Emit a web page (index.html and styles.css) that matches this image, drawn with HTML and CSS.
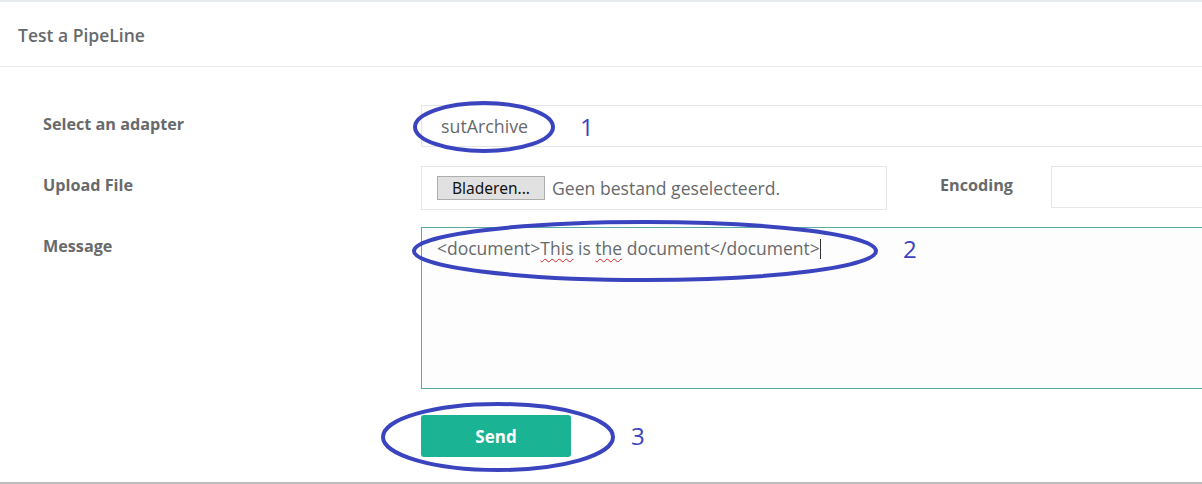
FILE: index.html
```html
<!DOCTYPE html>
<html>
<head>
<meta charset="utf-8">
<link rel="stylesheet" href="styles.css">
</head>
<body>
<div class="page">
  <div class="title">Test a PipeLine</div>
  <div class="content">
    <div class="row row-adapter">
      <div class="label">Select an adapter</div>
      <div class="input input-adapter">sutArchive</div>
    </div>
    <div class="row row-file">
      <div class="label">Upload File</div>
      <div class="input input-file">
        <span class="file-btn">Bladeren...</span>
        <span class="file-text">Geen bestand geselecteerd.</span>
      </div>
      <div class="label label-enc">Encoding</div>
      <div class="input input-enc"></div>
    </div>
    <div class="row row-msg">
      <div class="label">Message</div>
      <div class="textarea">&lt;document&gt;<span class="spell">This</span> is <span class="spell">the</span> document&lt;/document&gt;<span class="caret"></span></div>
    </div>
    <div class="row row-send">
      <div class="label"></div>
      <div class="btn">Send</div>
    </div>
  </div>
  <svg class="marks" width="1202" height="484" viewBox="0 0 1202 484">
    <ellipse cx="484" cy="127" rx="69" ry="24" />
    <ellipse cx="645" cy="251" rx="231" ry="29" />
    <ellipse cx="498" cy="437" rx="115" ry="33" />
    <text x="580" y="136">1</text>
    <text x="903" y="258">2</text>
    <text x="631" y="445">3</text>
  </svg>
</div>
</body>
</html>
```
FILE: styles.css
```css
html, body {
  margin: 0;
  padding: 0;
  background: #ffffff;
  overflow: hidden;
}
body {
  font-family: "Open Sans", "Liberation Sans", sans-serif;
  color: #676a6c;
}
.page {
  position: relative;
  width: 1202px;
  height: 484px;
  box-sizing: border-box;
  border-top: 2px solid #e7eaec;
  border-bottom: 2px solid #bcbcbc;
  overflow: hidden;
}
.title {
  height: 65px;
  box-sizing: border-box;
  border-bottom: 1px solid #e7eaec;
  padding-left: 18px;
  display: flex;
  align-items: center;
  font-size: 17.5px;
  font-weight: 600;
  color: #676a6c;
  padding-top: 2px;
}
.content {
  padding: 38px 0 0 43px;
}
.row {
  display: flex;
  align-items: flex-start;
}
.label {
  width: 378px;
  flex: none;
  padding-top: 9px;
  font-size: 16.2px;
  line-height: 21px;
  font-weight: 700;
  color: #676a6c;
}
.row-adapter .label { padding-top: 9px; }
.input {
  box-sizing: border-box;
  border: 1px solid #e5e6e7;
  background: #fff;
  flex: none;
}
.input-adapter {
  width: 800px;
  height: 42px;
  padding-left: 19px;
  display: flex;
  align-items: center;
  font-size: 17.8px;
}
.row-adapter { margin-bottom: 19px; }
.input-file {
  width: 466px;
  height: 44px;
  padding-left: 15px;
  display: flex;
  align-items: center;
  gap: 7px;
  font-size: 16px;
}
.file-btn {
  box-sizing: border-box;
  height: 24px;
  width: 108px;
  display: flex;
  align-items: center;
  justify-content: center;
  background: #e1e1e1;
  border: 1px solid #adadad;
  color: #111;
  font-family: "Noto Sans", "Open Sans", sans-serif;
  font-size: 15.5px;
}
.file-text {
  color: #676a6c;
  font-size: 17.6px;
}
.label-enc {
  width: 73px;
  margin-left: 53px;
  white-space: nowrap;
}
.input-enc {
  margin-left: 38px;
  width: 300px;
  height: 42px;
}
.row-file { margin-bottom: 17px; }
.textarea {
  box-sizing: border-box;
  width: 800px;
  height: 162px;
  flex: none;
  border: 1px solid #5aaba5;
  border-right: none;
  background: #fdfdfd;
  padding: 7px 15px;
  font-size: 17.5px;
  line-height: 27px;
  color: #676a6c;
  white-space: nowrap;
}
.spell {
  text-decoration: underline wavy #d22;
  text-decoration-thickness: 1px;
  text-underline-offset: 3px;
}
.caret {
  display: inline-block;
  width: 1px;
  height: 20px;
  background: #333;
  vertical-align: -4px;
}
.row-msg { margin-bottom: 26px; }
.btn {
  width: 150px;
  height: 42px;
  flex: none;
  background: #1ab394;
  border-radius: 3px;
  color: #fff;
  font-weight: 700;
  font-size: 17px;
  display: flex;
  align-items: center;
  justify-content: center;
}
.marks {
  position: absolute;
  left: 0;
  top: -2px;
  pointer-events: none;
}
.marks ellipse {
  fill: none;
  stroke: #3b44bf;
  stroke-width: 4;
}
.marks text {
  fill: #3b44bf;
  font-family: "Open Sans", sans-serif;
  font-size: 24px;
}
```
